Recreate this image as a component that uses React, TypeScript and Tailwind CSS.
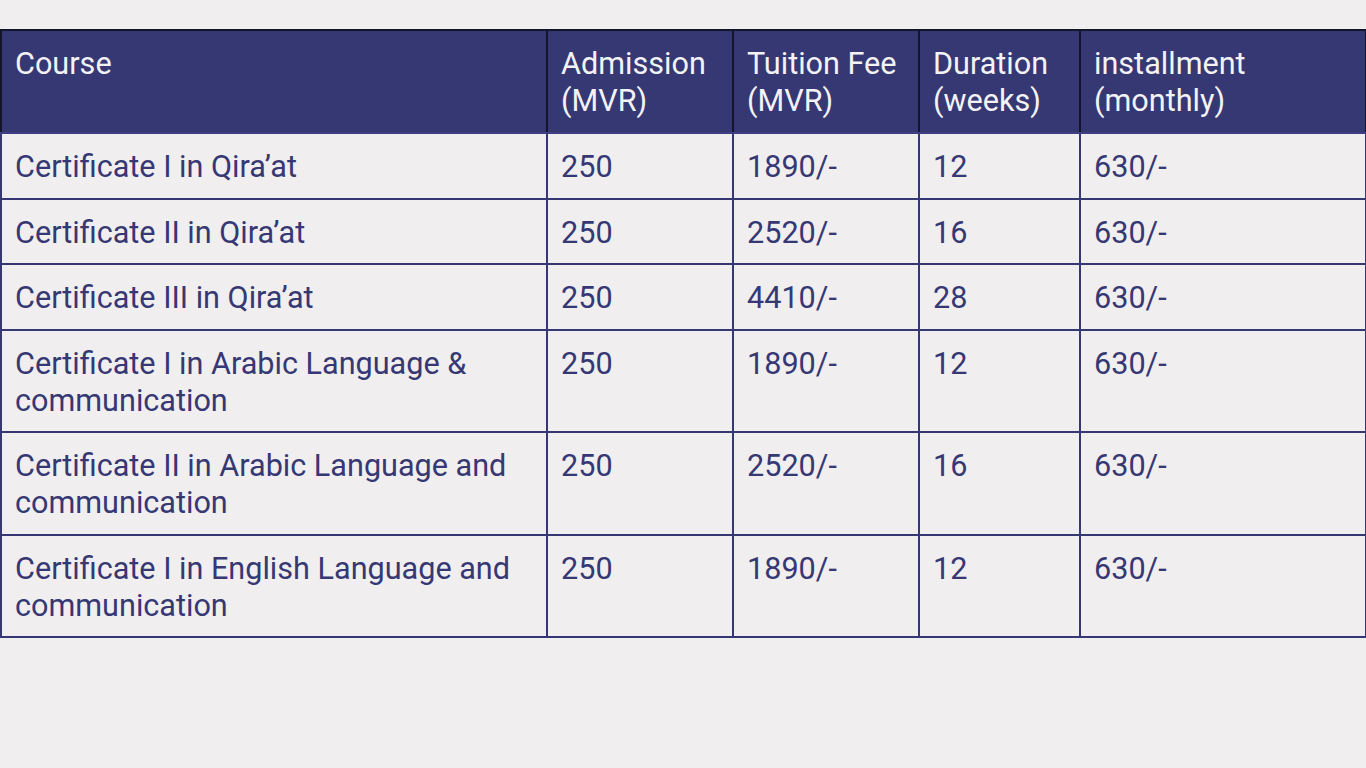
import React from "react";

const rows: string[][] = [
  ["Certificate I in Qira’at", "250", "1890/-", "12", "630/-"],
  ["Certificate II in Qira’at", "250", "2520/-", "16", "630/-"],
  ["Certificate III in Qira’at", "250", "4410/-", "28", "630/-"],
  ["Certificate I in Arabic Language & communication", "250", "1890/-", "12", "630/-"],
  ["Certificate II in Arabic Language and communication", "250", "2520/-", "16", "630/-"],
  ["Certificate I in English Language and communication", "250", "1890/-", "12", "630/-"],
];

const headers = ["Course", "Admission (MVR)", "Tuition Fee (MVR)", "Duration (weeks)", "installment (monthly)"];

export default function App() {
  return (
    <div
      className="w-[1366px] h-[768px] bg-[#f0eeef] pt-[29px] overflow-hidden"
      style={{ fontFamily: "Roboto, 'Noto Sans', sans-serif" }}
    >
      <table className="w-[1365px] table-fixed border-collapse text-[30.6px] leading-[37px]">
        <colgroup>
          <col className="w-[546px]" />
          <col className="w-[186px]" />
          <col className="w-[186px]" />
          <col className="w-[161px]" />
          <col className="w-[286px]" />
        </colgroup>
        <thead>
          <tr className="bg-[#363874]">
            {headers.map((h, i) => (
              <th
                key={i}
                className="border-2 border-[#14142a] border-b-[#3d3f80] text-left align-top font-normal text-[#f3f2f5] pl-[13px] pr-[6px] pt-[14px] pb-[13px]"
              >
                {h}
              </th>
            ))}
          </tr>
        </thead>
        <tbody>
          {rows.map((r, ri) => (
            <tr key={ri}>
              {r.map((c, ci) => (
                <td
                  key={ci}
                  className="border-2 border-[#363874] align-top text-[#363874] pl-[13px] pr-[6px] pt-[14px] pb-[12.5px]"
                >
                  {c}
                </td>
              ))}
            </tr>
          ))}
        </tbody>
      </table>
    </div>
  );
}
